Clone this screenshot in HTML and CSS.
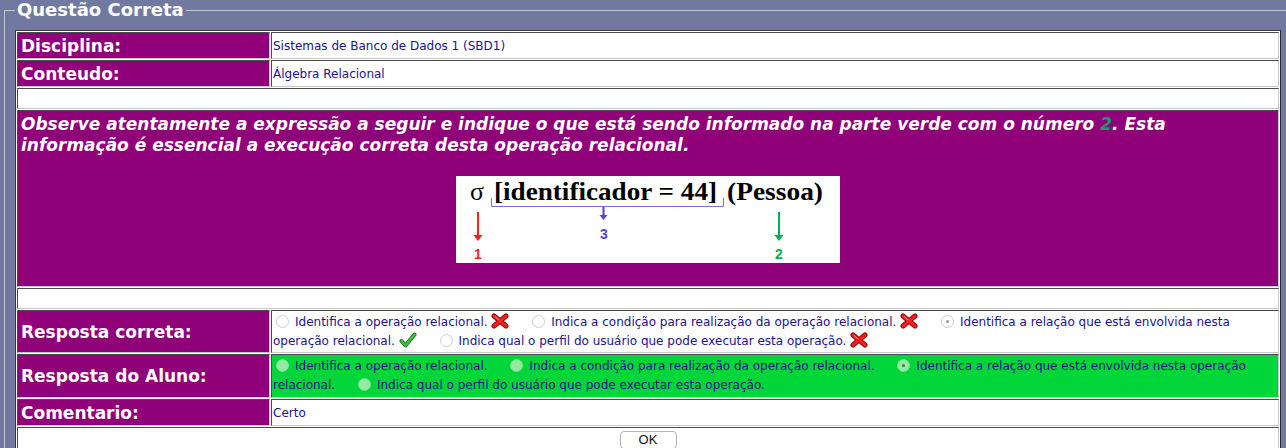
FILE: index.html
```html
<!DOCTYPE html>
<html lang="pt">
<head>
<meta charset="utf-8">
<title>Questão Correta</title>
<link rel="stylesheet" href="styles.css">
</head>
<body>
<fieldset class="panel">
  <legend class="panel-title">Questão Correta</legend>
  <table class="grid">
    <tr class="row-info">
      <td class="label">Disciplina:</td>
      <td class="value">Sistemas de Banco de Dados 1 (SBD1)</td>
    </tr>
    <tr class="row-info">
      <td class="label">Conteudo:</td>
      <td class="value">Álgebra Relacional</td>
    </tr>
    <tr class="row-blank"><td class="blank" colspan="2"></td></tr>
    <tr class="row-question">
      <td class="question" colspan="2">
        <p class="q-text">Observe atentamente a expressão a seguir e indique o que está sendo informado na parte verde com o número <span class="num-green">2</span>. Esta informação é essencial a execução correta desta operação relacional.</p>
        <div class="figure">
          <svg class="figure-svg" width="384" height="87" viewBox="0 0 384 87">
            <rect x="0" y="0" width="384" height="87" fill="#ffffff"/>
            <text x="14" y="24" class="fx-sigma">σ</text>
            <text x="38" y="24" class="fx-expr" textLength="223" lengthAdjust="spacingAndGlyphs">[identificador = 44]</text>
            <text x="271" y="24" class="fx-expr" textLength="96" lengthAdjust="spacingAndGlyphs">(Pessoa)</text>
            <path d="M35.5 22 V30.5 H267.5 V22" fill="none" stroke="#7b6fd6" stroke-width="1"/>
            <path d="M147.5 31 V40" stroke="#5b3fd8" stroke-width="2"/>
            <path d="M143.5 39 L151.5 39 L147.5 44 Z" fill="#5b3fd8"/>
            <text x="148" y="63" class="fx-num" fill="#5b3fd8">3</text>
            <path d="M22 36 V60" stroke="#ff1f1f" stroke-width="2"/>
            <path d="M17.5 59 L26.5 59 L22 65 Z" fill="#ff1f1f"/>
            <text x="22" y="83" class="fx-num" fill="#ff1f1f">1</text>
            <path d="M323 36 V60" stroke="#00b050" stroke-width="2"/>
            <path d="M318.5 59 L327.5 59 L323 65 Z" fill="#00b050"/>
            <text x="323" y="83" class="fx-num" fill="#00b050">2</text>
          </svg>
        </div>
      </td>
    </tr>
    <tr class="row-blank"><td class="blank" colspan="2"></td></tr>
    <tr class="row-answer">
      <td class="label">Resposta correta:</td>
      <td class="value options">
        <span class="radio first"></span>Identifica a operação relacional. <svg class="mark" width="18" height="16" viewBox="0 0 18 16"><path d="M3 3 L15 13 M15 3 L3 13" stroke="#a00000" stroke-width="5" stroke-linecap="round"/><path d="M3 3 L15 13 M15 3 L3 13" stroke="#ee2020" stroke-width="3" stroke-linecap="round"/><path d="M4 3.5 L8 7" stroke="#ff9a9a" stroke-width="1" stroke-linecap="round"/></svg>
        <span class="radio"></span>Indica a condição para realização da operação relacional. <svg class="mark" width="18" height="16" viewBox="0 0 18 16"><path d="M3 3 L15 13 M15 3 L3 13" stroke="#a00000" stroke-width="5" stroke-linecap="round"/><path d="M3 3 L15 13 M15 3 L3 13" stroke="#ee2020" stroke-width="3" stroke-linecap="round"/><path d="M4 3.5 L8 7" stroke="#ff9a9a" stroke-width="1" stroke-linecap="round"/></svg>
        <span class="radio checked"></span>Identifica a relação que está envolvida nesta operação relacional. <svg class="mark" width="18" height="16" viewBox="0 0 18 16"><path d="M2.5 9 L6.5 13.5 L15.5 2.5" fill="none" stroke="#1d7a1d" stroke-width="4" stroke-linecap="round" stroke-linejoin="round"/><path d="M2.5 9 L6.5 13.5 L15.5 2.5" fill="none" stroke="#3fc43f" stroke-width="2" stroke-linecap="round" stroke-linejoin="round"/></svg>
        <span class="radio"></span>Indica qual o perfil do usuário que pode executar esta operação. <svg class="mark" width="18" height="16" viewBox="0 0 18 16"><path d="M3 3 L15 13 M15 3 L3 13" stroke="#a00000" stroke-width="5" stroke-linecap="round"/><path d="M3 3 L15 13 M15 3 L3 13" stroke="#ee2020" stroke-width="3" stroke-linecap="round"/><path d="M4 3.5 L8 7" stroke="#ff9a9a" stroke-width="1" stroke-linecap="round"/></svg>
      </td>
    </tr>
    <tr class="row-answer">
      <td class="label">Resposta do Aluno:</td>
      <td class="value options student">
        <span class="radio first"></span>Identifica a operação relacional.
        <span class="radio"></span>Indica a condição para realização da operação relacional.
        <span class="radio checked"></span>Identifica a relação que está envolvida nesta operação relacional.
        <span class="radio"></span>Indica qual o perfil do usuário que pode executar esta operação.
      </td>
    </tr>
    <tr class="row-info">
      <td class="label">Comentario:</td>
      <td class="value">Certo</td>
    </tr>
    <tr class="row-actions">
      <td class="actions" colspan="2"><button class="btn" type="button">OK</button></td>
    </tr>
  </table>
</fieldset>
</body>
</html>
```
FILE: styles.css
```css
* { box-sizing: border-box; }
html, body { margin: 0; padding: 0; }
body {
  background: #7279a0;
  font-family: "DejaVu Sans", "Liberation Sans", sans-serif;
  width: 1286px;
  height: 448px;
  overflow: hidden;
}
.panel {
  margin: 0 -10px 0 3px;
  padding: 10px 10px 10px 10px;
  border: 2px groove #c4c7d8;
  min-width: 0;
}
.panel-title {
  color: #ffffff;
  font-weight: bold;
  font-size: 18px;
  line-height: 20px;
  padding: 0 2px;
}
.grid {
  width: 1266px;
  border-collapse: separate;
  border-spacing: 1px;
  border: 1px solid;
  border-color: #3a3a3a #2a2a2a #2a2a2a #3a3a3a;
  background: #ffffff;
}
.grid td {
  border: 1px solid;
  border-color: #4a4a4a #c8c8c8 #c8c8c8 #4a4a4a;
  padding: 0;
}
.label {
  width: 253px;
  background: #900079;
  color: #ffffff;
  font-weight: bold;
  font-size: 17px;
  padding: 0 3px !important;
  vertical-align: middle;
}
.value {
  background: #ffffff;
  color: #22118f;
  font-size: 12px;
  padding: 0 1px !important;
  vertical-align: middle;
}
.row-info td { height: 27px; }
.row-blank td { height: 21px; background: #ffffff; }
.row-question td { height: 177px; }
.question {
  background: #900079;
  vertical-align: top;
  padding: 3px 3px 0 3px !important;
}
.q-text {
  margin: 0;
  color: #ffffff;
  font-weight: bold;
  font-style: italic;
  font-size: 17px;
  line-height: 21px;
}
.num-green { color: #1a9a72; }
.figure {
  display: flex;
  justify-content: center;
  margin-top: 20px;
}
.figure-svg { display: block; }
.fx-sigma {
  font-family: "Liberation Serif", serif;
  font-size: 26px;
  fill: #000000;
}
.fx-expr {
  font-family: "Liberation Serif", serif;
  font-weight: bold;
  font-size: 26px;
  fill: #000000;
}
.fx-num {
  font-family: "Liberation Sans", sans-serif;
  font-weight: bold;
  font-size: 14px;
  text-anchor: middle;
}
.row-answer td { height: 43px; }
.row-answer + .row-answer td { height: 44px; }
.options { line-height: 19px; }
.student { background: #00d639; }
.radio {
  display: inline-block;
  width: 13px;
  height: 13px;
  border-radius: 50%;
  border: 1px solid #cfcfcf;
  background: #ffffff;
  vertical-align: -2px;
  margin: 0 6px 0 19px;
  position: relative;
}
.radio.first { margin-left: 3px; }
.radio.checked::after {
  content: "";
  position: absolute;
  left: 4px;
  top: 4px;
  width: 3px;
  height: 3px;
  border-radius: 50%;
  background: #9a9a9a;
}
.student .radio {
  border-color: #7fe08f;
  background: #93eaa2;
}
.student .radio.checked::after { background: #3a7a44; }
.mark {
  display: inline-block;
  vertical-align: -3px;
}
.row-actions td { height: 24px; }
.actions {
  vertical-align: top;
  padding-top: 3px !important;
}
.btn {
  display: block;
  margin: 0 auto;
  width: 57px;
  height: 18px;
  padding: 0;
  border: 1px solid #b4b4b4;
  border-radius: 4px;
  background: #ffffff;
  font-family: "Liberation Sans", sans-serif;
  font-size: 13px;
  color: #111111;
  line-height: 16px;
}
```
